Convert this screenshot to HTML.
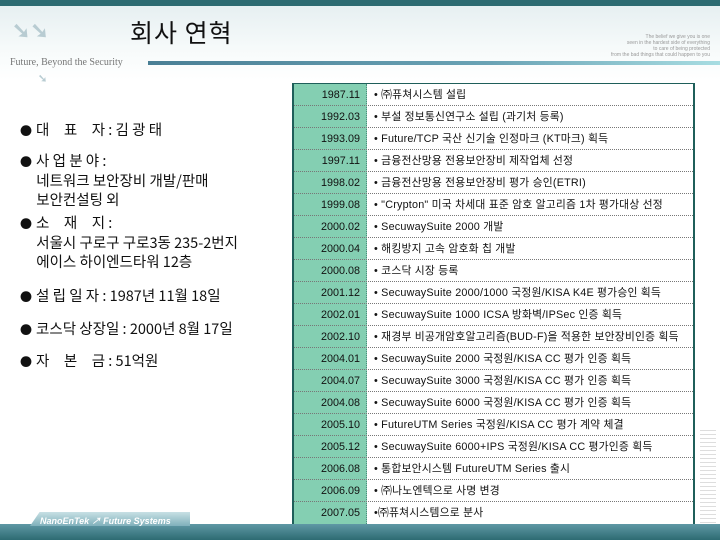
<!DOCTYPE html>
<html><head><meta charset="utf-8"><style>
*{margin:0;padding:0;box-sizing:border-box}
body{width:720px;height:540px;overflow:hidden;background:#fff;position:relative;font-family:"Liberation Sans","Noto Sans CJK KR",sans-serif}
.hdr{position:absolute;left:0;top:0;width:720px;height:80px;background:linear-gradient(180deg,#e4eef0 0%,#f6fafa 60%,#fff 100%)}
.band{position:absolute;left:0;top:0;width:720px;height:6px;background:#2d6b72}
.title{position:absolute;left:130px;top:14px;font-size:25px;color:#111;font-family:"Noto Sans CJK KR",sans-serif;letter-spacing:1px}
.fb{position:absolute;left:10px;top:57px;font-size:10px;color:#777;font-family:"Liberation Serif",serif}
.line{position:absolute;left:148px;top:61px;width:572px;height:4px;background:linear-gradient(90deg,#4a7f95,#6aa3b5 60%,#a8dde2)}
.arr{position:absolute;color:#b8ccd2;font-weight:bold}
.tbl{position:absolute;left:292px;top:83px;width:403px;height:443px;border:2px solid #1f5f5a;border-top:1px solid #1f5f5a;background:#fff}
.dc{position:absolute;left:0;top:0;width:73px;height:100%;background:#84cfb2;border-right:1px dotted #4a8a7a}
.row{position:absolute;left:0;width:100%;height:22px;border-bottom:1px dotted #777;font-size:10.8px;color:#111;line-height:22px}
.row .d{position:absolute;left:0;top:0;width:66px;text-align:right}
.row .t{position:absolute;left:80px;top:0;white-space:nowrap;letter-spacing:0.2px}
.info{position:absolute;left:20px;font-size:14.5px;color:#111;line-height:19px;font-family:"Noto Sans CJK KR",sans-serif}
.info b{font-weight:normal;font-size:12px;margin-right:4px}
.bot{position:absolute;left:0;top:524px;width:720px;height:16px;background:linear-gradient(180deg,#5f98a5,#2d6b72)}
.logo{position:absolute;left:40px;top:520px;font-size:9px;color:#fff;font-style:italic;font-weight:bold}
.side{position:absolute;left:700px;top:430px;width:16px;height:100px;background:repeating-linear-gradient(180deg,#ddd 0 1px,#fff 1px 4px)}
</style></head><body>
<div class="hdr"></div><div class="band"></div>
<div class="arr" style="left:12px;top:18px;font-size:22px">➘➘</div>
<div class="arr" style="left:38px;top:72px;font-size:11px">➘</div>
<div class="title">회사 연혁</div>
<div class="fb">Future, Beyond the Security</div>
<div class="line"></div>
<div style="position:absolute;left:590px;top:34px;font-size:5px;color:#999;text-align:right;line-height:6px;width:120px">The belief we give you is one<br>seen in the hardest side of everything<br>to care of being protected<br>from the bad things that could happen to you</div>
<div class="info" style="top:120px"><b>●</b>대　표　자 : 김 광 태</div>
<div class="info" style="top:151px"><b>●</b>사 업 분 야 :<br>&nbsp;&nbsp;&nbsp;&nbsp;&nbsp;네트워크 보안장비 개발/판매<br>&nbsp;&nbsp;&nbsp;&nbsp;&nbsp;보안컨설팅 외</div>
<div class="info" style="top:213px"><b>●</b>소　재　지 :<br>&nbsp;&nbsp;&nbsp;&nbsp;&nbsp;서울시 구로구 구로3동 235-2번지<br>&nbsp;&nbsp;&nbsp;&nbsp;&nbsp;에이스 하이엔드타워 12층</div>
<div class="info" style="top:286px"><b>●</b>설 립 일 자 : 1987년 11월 18일</div>
<div class="info" style="top:319px"><b>●</b>코스닥 상장일 : 2000년 8월 17일</div>
<div class="info" style="top:351px"><b>●</b>자　본　금 : 51억원</div>
<div class="tbl"><div class="dc"></div>
<div class="row" style="top:0"><span class="d">1987.11</span><span class="t">• ㈜퓨쳐시스템 설립</span></div>
<div class="row" style="top:22px"><span class="d">1992.03</span><span class="t">• 부설 정보통신연구소 설립 (과기처 등록)</span></div>
<div class="row" style="top:44px"><span class="d">1993.09</span><span class="t">• Future/TCP 국산 신기술 인정마크 (KT마크) 획득</span></div>
<div class="row" style="top:66px"><span class="d">1997.11</span><span class="t">• 금융전산망용 전용보안장비 제작업체 선정</span></div>
<div class="row" style="top:88px"><span class="d">1998.02</span><span class="t">• 금융전산망용 전용보안장비 평가 승인(ETRI)</span></div>
<div class="row" style="top:110px"><span class="d">1999.08</span><span class="t">• "Crypton" 미국 차세대 표준 암호 알고리즘 1차 평가대상 선정</span></div>
<div class="row" style="top:132px"><span class="d">2000.02</span><span class="t">• SecuwaySuite 2000 개발</span></div>
<div class="row" style="top:154px"><span class="d">2000.04</span><span class="t">• 해킹방지 고속 암호화 칩 개발</span></div>
<div class="row" style="top:176px"><span class="d">2000.08</span><span class="t">• 코스닥 시장 등록</span></div>
<div class="row" style="top:198px"><span class="d">2001.12</span><span class="t">• SecuwaySuite 2000/1000 국정원/KISA K4E 평가승인 획득</span></div>
<div class="row" style="top:220px"><span class="d">2002.01</span><span class="t">• SecuwaySuite 1000 ICSA 방화벽/IPSec 인증 획득</span></div>
<div class="row" style="top:242px"><span class="d">2002.10</span><span class="t">• 재경부 비공개암호알고리즘(BUD-F)을 적용한 보안장비인증 획득</span></div>
<div class="row" style="top:264px"><span class="d">2004.01</span><span class="t">• SecuwaySuite 2000 국정원/KISA CC 평가 인증 획득</span></div>
<div class="row" style="top:286px"><span class="d">2004.07</span><span class="t">• SecuwaySuite 3000 국정원/KISA CC 평가 인증 획득</span></div>
<div class="row" style="top:308px"><span class="d">2004.08</span><span class="t">• SecuwaySuite 6000 국정원/KISA CC 평가 인증 획득</span></div>
<div class="row" style="top:330px"><span class="d">2005.10</span><span class="t">• FutureUTM Series 국정원/KISA CC 평가 계약 체결</span></div>
<div class="row" style="top:352px"><span class="d">2005.12</span><span class="t">• SecuwaySuite 6000+IPS 국정원/KISA CC 평가인증 획득</span></div>
<div class="row" style="top:374px"><span class="d">2006.08</span><span class="t">• 통합보안시스템 FutureUTM Series 출시</span></div>
<div class="row" style="top:396px"><span class="d">2006.09</span><span class="t">• ㈜나노엔텍으로 사명 변경</span></div>
<div class="row" style="top:418px;border-bottom:none"><span class="d">2007.05</span><span class="t">•㈜퓨쳐시스템으로 분사</span></div>
</div>
<div class="side"></div>
<div class="bot"></div>
<div style="position:absolute;left:30px;top:512px;width:160px;height:14px;background:linear-gradient(180deg,#c8e0e4,#7fb0bb);clip-path:polygon(6% 0,100% 0,100% 100%,0 100%)"></div>
<div class="logo" style="top:514px">NanoEnTek ↗ Future Systems</div>
</body></html>
